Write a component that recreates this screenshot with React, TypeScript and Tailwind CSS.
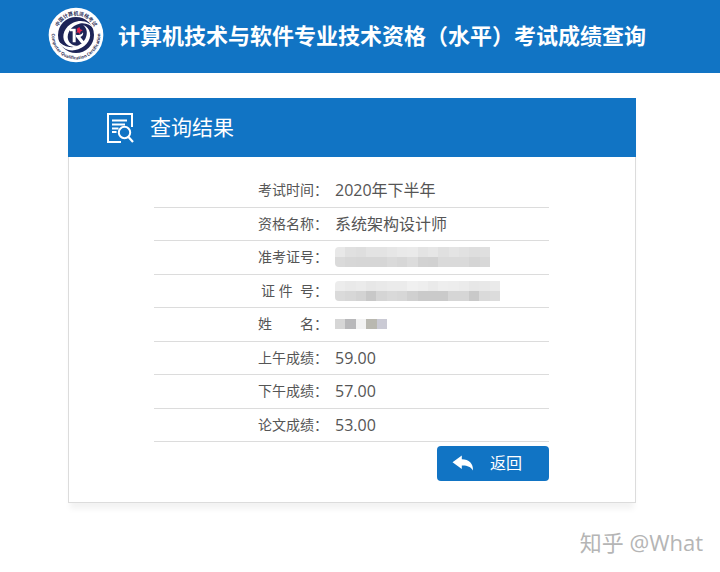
import React from 'react';

const LogoIcon = () => (
  <svg viewBox="0 0 168 168" className="size-14 shrink-0" role="img" aria-label="Computer Qualification Certification">
    <defs>
      <path id="topArc" d="M 25 84 A 59 59 0 0 1 143 84" />
      <path id="bottomArc" d="M 12 72 A 73 73 0 1 0 156 72" />
    </defs>
    <circle cx="84" cy="84" r="82" fill="#ffffff" />
    <circle cx="84" cy="84" r="54" fill="#1d2457" />
    <text fontSize="15" fontWeight="bold" fill="#33365c" textAnchor="middle">
      <textPath href="#topArc" startOffset="50%">中国计算机资格考试</textPath>
    </text>
    <text fontSize="13" fontWeight="bold" fill="#33365c" textAnchor="middle">
      <textPath href="#bottomArc" startOffset="50%">Computer Qualification Certification</textPath>
    </text>
    <path
      d="M139 68 C127 42 99 36 75 47 C50 59 39 86 51 106 C60 120 77 123 94 117 C77 118 64 111 60 97 C55 77 71 55 94 50 C111 46 127 52 139 68 Z"
      fill="#ffffff"
    />
    <path
      d="M29 99 C41 127 66 136 91 127 C118 117 134 91 123 69 C119 61 112 56 105 54 C115 62 119 74 115 87 C109 109 87 123 64 120 C50 118 38 111 29 99 Z"
      fill="#ffffff"
    />
    <path d="M66 65 H83 V106 H74 V73 H66 Z" fill="#ffffff" />
    <path d="M84 83 C94 86 101 83 105 76 C107 83 103 88 97 90 L112 108 H99 L84 89 Z" fill="#ffffff" />
    <path d="M86 66 L94 60 L97 67 L104 70 L97 74 L96 81 L90 76 L84 79 L88 72 Z" fill="#e0244c" />
  </svg>
);

const ResultIcon = () => (
  <svg viewBox="0 0 28 32" className="h-8 w-7 shrink-0" fill="none" stroke="#ffffff" aria-hidden="true">
    <path d="M15 30 H2 V2 H26 V15" strokeWidth="2" />
    <path d="M6 8.5 H21 M6 12.5 H19 M6 16.5 H12.5 M6 20 H10.5" strokeWidth="1.8" />
    <circle cx="18.5" cy="20.5" r="5.7" strokeWidth="2" />
    <path d="M22.5 25 L27 30" strokeWidth="2.2" />
  </svg>
);

const BackIcon = () => (
  <svg viewBox="0 0 22 16" className="h-4 w-[22px]" fill="#ffffff" aria-hidden="true">
    <path d="M0.5 7.3 L9.8 0.5 V4.3 C17 4.4 21.4 8.5 21 15.6 C18.6 11.6 15.2 10.3 9.8 10.5 V14 Z" />
  </svg>
);

const Mosaic = ({ top, bottom, label, className }: { top: string[]; bottom: string[]; label: string; className: string }) => (
  <div role="img" aria-label={label} className={`overflow-hidden rounded-l ${className}`}>
    {[top, bottom].map((cells, row) => (
      <div key={row} className="flex">
        {cells.map((color, i) => (
          <span key={i} className="h-[10px] flex-1" style={{ backgroundColor: color }} />
        ))}
      </div>
    ))}
  </div>
);

const ticketTop = ['#e8e8e8', '#e0e0e0', '#dedede', '#e3e3e3', '#e3e3e3', '#e6e6e6', '#e9e9e9', '#eaeaea', '#e3e3e3', '#e6e6e6', '#e0e0e0', '#e4e4e4', '#e1e1e1', '#dedede', '#dfdfdf'];
const ticketBottom = ['#dadada', '#d7d7d7', '#d6d6d6', '#d6d6d6', '#d6d6d6', '#dadada', '#d7d7d7', '#dcdcdc', '#d2d2d2', '#d1d1d1', '#dadada', '#dadada', '#dadada', '#d5d5d5', '#d8d8d8'];
const idTop = ['#ececec', '#e9e9e9', '#ebebeb', '#e7e7e7', '#e9e9e9', '#ebebeb', '#ebebeb', '#f0f0f0', '#eeeeee', '#eaeaea', '#eeeeee', '#ededed', '#ebebeb', '#e7e7e7', '#e8e8e8', '#eaeaea'];
const idBottom = ['#dadada', '#d7d7d7', '#d3d3d3', '#c8c8c8', '#d5d5d5', '#d9d9d9', '#d7d7d7', '#d0d0d0', '#cacaca', '#cacaca', '#cacaca', '#d6d6d6', '#d6d6d6', '#c9c9c9', '#dadada', '#dcdcdc'];

const nameCells = ['#d6d6d6', '#b8b8ba', '#f2f2f2', '#b9b8b0', '#cacad4'];

const rows: { label: string; value: React.ReactNode }[] = [
  { label: '考试时间：', value: '2020年下半年' },
  { label: '资格名称：', value: '系统架构设计师' },
  { label: '准考证号：', value: <Mosaic top={ticketTop} bottom={ticketBottom} label="准考证号" className="w-[155px]" /> },
  { label: '证 件  号：', value: <Mosaic top={idTop} bottom={idBottom} label="证件号" className="w-[165px]" /> },
  {
    label: '姓　　名：',
    value: (
      <div className="flex w-[52px]" role="img" aria-label="姓名">
        {nameCells.map((color, i) => (
          <span key={i} className="h-[10px] flex-1" style={{ backgroundColor: color }} />
        ))}
      </div>
    ),
  },
  { label: '上午成绩：', value: '59.00' },
  { label: '下午成绩：', value: '57.00' },
  { label: '论文成绩：', value: '53.00' },
];

const App = () => {
  return (
    <div className="bg-white font-['Open_Sans','Noto_Sans_CJK_SC',sans-serif] text-[#555555]">
      <header className="flex h-[73px] items-start gap-[14px] bg-[#1174c4] pt-[7px] pl-12">
        <LogoIcon />
        <h1 className="pt-3 text-[22px] leading-8 font-bold whitespace-nowrap text-white">
          计算机技术与软件专业技术资格（水平）考试成绩查询
        </h1>
      </header>

      <main className="pt-[25px] pr-[84px] pl-[68px]">
        <section className="border border-t-0 border-[#dcdcdc] shadow-[0_8px_6px_-2px_#f3f3f3]">
          <div className="-mx-px flex h-[59px] items-center gap-4 bg-[#1174c4] pl-[38px] text-white">
            <ResultIcon />
            <h2 className="text-[21px]">查询结果</h2>
          </div>

          <div className="pt-4 pr-[86px] pb-[21px] pl-[85px]">
            <table className="w-full table-fixed">
              <tbody>
                {rows.map(({ label, value }) => (
                  <tr key={label} className="h-[34px] border-b border-[#dcdcdc] even:h-[33px]">
                    <th scope="row" className="w-[174px] p-0 text-right text-sm font-normal whitespace-pre">
                      {label}
                    </th>
                    <td className="p-0 pl-[7px] text-base">{value}</td>
                  </tr>
                ))}
              </tbody>
            </table>
            <div className="flex justify-end pt-1">
              <button type="button" className="flex h-[35px] w-28 items-center gap-4 rounded bg-[#1174c4] pl-[15px] text-base text-white">
                <BackIcon />
                返回
              </button>
            </div>
          </div>
        </section>
      </main>

      <footer className="flex justify-end pt-[23px] pr-[17px] text-[22px] text-[#b5b5b5]">
        <p>知乎 @What</p>
      </footer>
    </div>
  );
};

export default App;
